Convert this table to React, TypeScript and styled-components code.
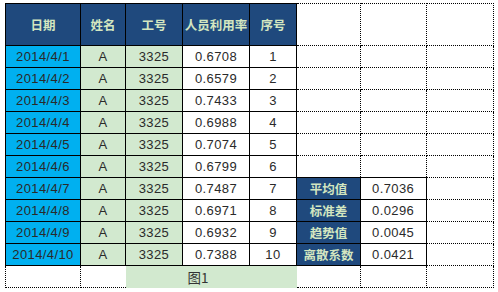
import React from 'react';
import styled, { createGlobalStyle, css } from 'styled-components';

const Global = createGlobalStyle`
  html, body { margin: 0; padding: 0; background: #ffffff; }
`;

type Kind = 'head' | 'date' | 'green' | 'white' | 'empty' | 'stat' | 'value' | 'caption';

const Sheet = styled.table`
  margin: 3px 0 0 5px;
  border-collapse: collapse;
  table-layout: fixed;
  width: 488px;
  font-family: "Liberation Sans", "Noto Sans CJK SC", sans-serif;
`;

const Row = styled.tr<{ $h: number }>`
  height: ${(p) => p.$h}px;
`;

const solid = css`
  border: 1px solid #000000;
`;

const Cell = styled.td<{ $kind: Kind; $noLeft?: boolean; $noRight?: boolean }>`
  padding: 0;
  text-align: center;
  vertical-align: middle;
  font-size: 13px;
  letter-spacing: 0.4px;
  color: #2a2a2a;
  white-space: nowrap;
  overflow: hidden;
  ${(p) => {
    switch (p.$kind) {
      case 'head':
      case 'stat':
        return css`
          ${solid};
          background: #1f497d;
          color: #d3e6c0;
          font-family: "Noto Sans CJK SC", sans-serif;
          font-weight: 700;
          font-size: 12.5px;
          letter-spacing: 0;
        `;
      case 'date':
        return css`
          ${solid};
          background: #00b0f0;
        `;
      case 'green':
        return css`
          ${solid};
          background: #d2e9cf;
        `;
      case 'white':
        return css`
          ${solid};
          background: #ffffff;
        `;
      case 'value':
        return css`
          ${solid};
          background: #ffffff;
          text-align: left;
          padding-left: 11px;
        `;
      case 'caption':
        return css`
          border: none;
          border-top: 1px solid #000000;
          background: #d2e9cf;
          font-family: "Noto Sans CJK SC", sans-serif;
          font-size: 13.5px;
          letter-spacing: 0;
          color: #333333;
          text-align: left;
          padding-left: 62px;
        `;
      default:
        return css`
          border: 1px dotted #000000;
          background: #ffffff;
        `;
    }
  }}
  ${(p) => p.$noLeft && css`border-left: none;`}
  ${(p) => p.$noRight && css`border-right: none;`}
`;

const widths = [75, 45, 57, 67, 47, 64, 66, 67];

const rates = ['0.6708', '0.6579', '0.7433', '0.6988', '0.7074', '0.6799', '0.7487', '0.6971', '0.6932', '0.7388'];
const stats: Record<number, [string, string]> = {
  6: ['平均值', '0.7036'],
  7: ['标准差', '0.0296'],
  8: ['趋势值', '0.0045'],
  9: ['离散系数', '0.0421'],
};

export default function App() {
  return (
    <>
      <Global />
      <Sheet>
        <colgroup>
          {widths.map((w, i) => (
            <col key={i} style={{ width: w }} />
          ))}
        </colgroup>
        <tbody>
          <Row $h={42}>
            <Cell $kind="head">日期</Cell>
            <Cell $kind="head">姓名</Cell>
            <Cell $kind="head">工号</Cell>
            <Cell $kind="head">人员利用率</Cell>
            <Cell $kind="head">序号</Cell>
            <Cell $kind="empty" />
            <Cell $kind="empty" />
            <Cell $kind="empty" />
          </Row>
          {rates.map((r, i) => (
            <Row $h={22} key={i}>
              <Cell $kind="date">2014/4/{i + 1}</Cell>
              <Cell $kind="green">A</Cell>
              <Cell $kind="green">3325</Cell>
              <Cell $kind="white">{r}</Cell>
              <Cell $kind="white">{i + 1}</Cell>
              {stats[i] ? (
                <>
                  <Cell $kind="stat">{stats[i][0]}</Cell>
                  <Cell $kind="value">{stats[i][1]}</Cell>
                </>
              ) : (
                <>
                  <Cell $kind="empty" />
                  <Cell $kind="empty" />
                </>
              )}
              <Cell $kind="empty" />
            </Row>
          ))}
          <Row $h={22}>
            <Cell $kind="empty" />
            <Cell $kind="empty" $noRight />
            <Cell $kind="caption" colSpan={3}>图1</Cell>
            <Cell $kind="empty" $noLeft />
            <Cell $kind="empty" />
            <Cell $kind="empty" />
          </Row>
        </tbody>
      </Sheet>
    </>
  );
}
